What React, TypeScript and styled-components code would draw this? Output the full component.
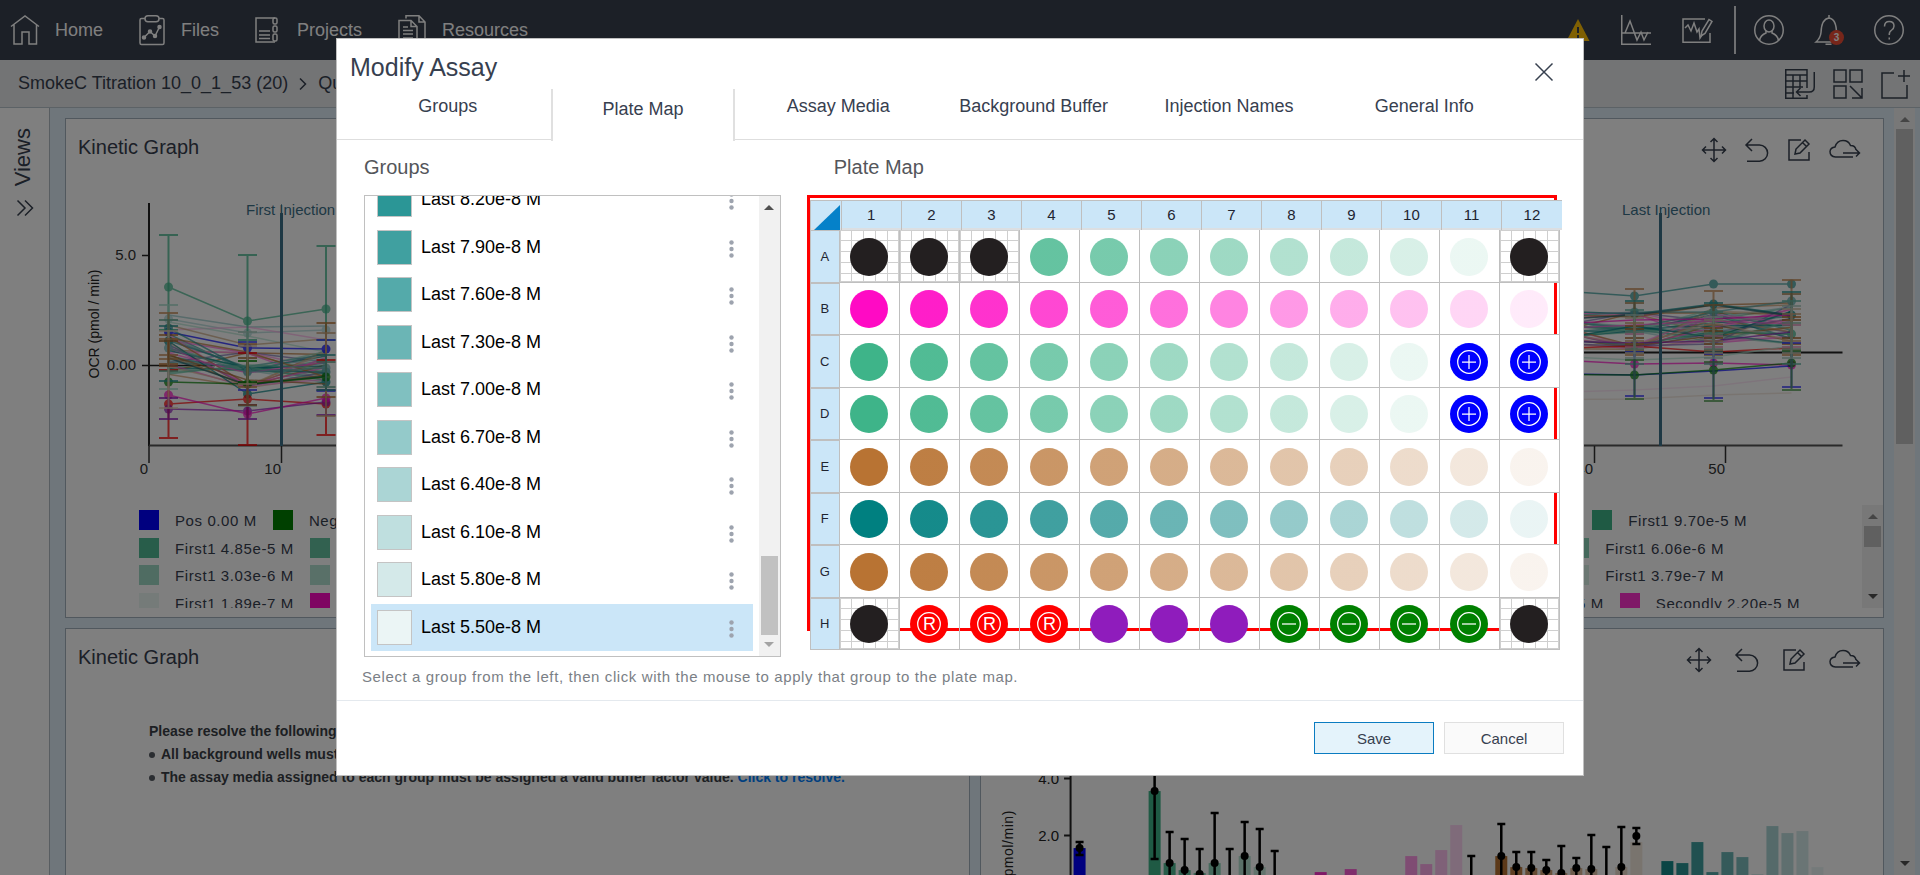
import React from "react";
import styled, { createGlobalStyle, css } from "styled-components";

const GlobalStyle = createGlobalStyle`
  *, *::before, *::after { box-sizing: border-box; }
  body {
    margin: 0;
    overflow: hidden;
    font-family: "Liberation Sans", Arial, sans-serif;
    font-size: 18px;
    color: #37404f;
    background: #fff;
  }
  h1, h2, h3 { margin: 0; font-weight: normal; }
  p, ul { margin: 0; padding: 0; }
  button { font-family: inherit; color: inherit; border: 0; padding: 0; background: none; cursor: pointer; }
`;

/* ---------- colour scales ---------- */

const fade = (rgb: string, alpha: number) => `rgba(${rgb}, ${alpha})`;
const GREEN = "62, 180, 137";
const PINK = "255, 10, 196";
const COPPER = "184, 115, 51";
const TEAL = "0, 128, 128";
const scale = (rgb: string, steps: number) =>
  Array.from({ length: steps }, (_, i) => fade(rgb, (steps - i) / steps));
const greens = scale(GREEN, 10);
const pinks = scale(PINK, 12);
const coppers = scale(COPPER, 12);
const teals = scale(TEAL, 12);

/* ---------- icons ---------- */

const Glyph = styled.svg`
  display: block;
  flex: none;
  fill: none;
  stroke: currentColor;
  stroke-width: 1.5;
  overflow: visible;
`;

const HomeIcon = () => (
  <Glyph width="28" height="30" viewBox="0 0 28 30">
    <path d="M0 11.5 14 1l14 10.5M3 9.5V29H11V17h7V29h7.5V9.5" />
  </Glyph>
);
const FilesIcon = () => (
  <Glyph width="26" height="30" viewBox="0 0 26 30">
    <path d="M6 3.5H2.5q-1.500 0-1.500 1.500V28q0 1.500 1.500 1.500H23.500q1.500 0 1.500-1.500V5q0-1.500-1.500-1.500H20" />
    <rect x="6" y="0.75" width="14" height="6" rx="3" />
    <path d="M5 22.5 11 16.5l5 4.5 4.500-9" />
    <g fill="currentColor"><circle cx="5" cy="22.500" r="1.500" /><circle cx="11" cy="16.500" r="1.500" /><circle cx="16" cy="21" r="1.500" /><circle cx="20.500" cy="12" r="1.500" /></g>
  </Glyph>
);
const ProjectsIcon = () => (
  <Glyph width="26" height="30" viewBox="0 0 26 30">
    <path d="M20 3H1V27H20M4 16H15M4 20H15M4 23.500H15" />
    <rect x="18" y="3" width="4" height="6" rx="1.500" />
    <rect x="18" y="11" width="4" height="6" rx="1.500" />
    <rect x="18" y="19" width="4" height="7" rx="1.500" />
  </Glyph>
);
const ResourcesIcon = () => (
  <Glyph width="28" height="30" viewBox="0 0 28 30">
    <path d="M8 3.500V0.750H21L27 7V29M21 0.750V7H27" />
    <path d="M1 29V5.500H13L19 11.500V29M13 5.500V11.500H19M5 12H10M5 15.500H15M5 19H15M5 23H15" />
  </Glyph>
);
const AlertIcon = () => (
  <Glyph width="24" height="22" viewBox="0 0 24 22">
    <path d="M12 0 23.500 22H0.500Z" fill="#ffc107" stroke="none" />
    <path d="M12 8v6M12 16v3" stroke="#37404f" strokeWidth="2" />
  </Glyph>
);
const TraceIcon = () => (
  <Glyph width="30" height="30" viewBox="0 0 30 30">
    <path d="M0.750 0V29.250H30M1 18H30M4 18 9 6l7 19 4-8 3 8 4-8" />
  </Glyph>
);
const TraceEditIcon = () => (
  <Glyph width="30" height="30" viewBox="0 0 30 30">
    <path d="M23 4H1V27.250H28V18M3 13l3-3 3 6 3-8 3 9 2-3 1 9 2-3" />
    <path d="m19 21 1-5 7-11.500 3 2L23 18.500Z" />
  </Glyph>
);
const UserIcon = () => (
  <Glyph width="30" height="30" viewBox="0 0 30 30">
    <circle cx="15" cy="15" r="14.250" />
    <ellipse cx="15" cy="11" rx="5" ry="6" />
    <path d="M5.500 25.500q1-5.500 6.500-7.500v-2M24.500 25.500q-1-5.500-6.500-7.500v-2" />
  </Glyph>
);
const BellIcon = () => (
  <Glyph width="28" height="30" viewBox="0 0 28 30">
    <path d="M1 27H25q-3-3-3.500-8.500Q21.500 4 14 3 6.500 4 6 17.500 5.500 23 1 27ZM14 3V0M10.500 29.250h6" />
  </Glyph>
);
const HelpIcon = () => (
  <Glyph width="30" height="30" viewBox="0 0 30 30">
    <circle cx="15" cy="15" r="14.250" />
    <path d="M10.500 11.500q0-5 4.750-5t4.750 4.500q0 2.500-2.500 4.250T15.250 20M15.250 22.500v2" />
  </Glyph>
);
const TableReturnIcon = () => (
  <Glyph width="30" height="30" viewBox="0 0 30 30">
    <path d="M22 19V0.750H0.750V29.250H22V26M1 6H22M1 12H22M1 18H18M1 24H9M8 6V29M15 6V18M29.250 3V18q0 5-5 5H11M15.500 19l-4 4 4 4" />
  </Glyph>
);
const TilesIcon = () => (
  <Glyph width="30" height="30" viewBox="0 0 30 30">
    <path d="M1 1H13V13H1ZM17 1H29V13H17ZM1 17H13V29H1ZM17 17 29 29M29 19V29H19" />
  </Glyph>
);
const AddPaneIcon = () => (
  <Glyph width="30" height="30" viewBox="0 0 30 30">
    <path d="M13 4H1V29H26V16M23 1V13M17 7H29" />
  </Glyph>
);
const MoveIcon = () => (
  <Glyph width="24" height="24" viewBox="0 0 24 24">
    <path d="M12 0.500V23.500M0.500 12H23.500M8.500 4 12 0.500 15.500 4M8.500 20l3.500 3.500 3.500-3.500M4 8.500 0.500 12 4 15.500M20 8.500l3.500 3.500-3.500 3.500" />
  </Glyph>
);
const UndoIcon = () => (
  <Glyph width="24" height="24" viewBox="0 0 24 24">
    <path d="M7 1 1 7l6 6M1 7H14.500a8 8 0 0 1 0 16.200H2" />
  </Glyph>
);
const EditIcon = () => (
  <Glyph width="22" height="22" viewBox="0 0 22 22">
    <path d="M13 1H1V21H21V13M7 15l1-5 9-9 4 4-9 9ZM14.500 3.500l4 4" />
  </Glyph>
);
const CloudIcon = () => (
  <Glyph width="32" height="22" viewBox="0 0 32 22">
    <path d="M24 18H6.500Q1 17.500 1 12.500 1.500 8.500 6 8 8 1.500 14 1.500q5.500 0 7.500 5 5 0 5.500 4.500M14 14H30.500M27 10.500l3.500 3.500-3.500 3.500" />
  </Glyph>
);
const DoubleChevron = () => (
  <Glyph width="16" height="16" viewBox="0 0 16 16">
    <path d="M0.500 0.500 8 8 0.500 15.500M8 0.500 15.500 8 8 15.500" />
  </Glyph>
);
const Chevron = () => (
  <Glyph width="8" height="12" viewBox="0 0 8 12">
    <path d="M1 0.500 6.500 6 1 11.500" />
  </Glyph>
);
const CloseIcon = () => (
  <Glyph width="18" height="18" viewBox="0 0 18 18">
    <path d="M0.500 0.500 17.500 17.500M17.500 0.500 0.500 17.500" />
  </Glyph>
);
const DotsIcon = () => (
  <Glyph width="5" height="18" viewBox="0 0 5 18">
    <g fill="#9da3ae" stroke="none"><circle cx="2.500" cy="2.500" r="2.200" /><circle cx="2.500" cy="9" r="2.200" /><circle cx="2.500" cy="15.500" r="2.200" /></g>
  </Glyph>
);

/* ---------- page frame ---------- */

const Page = styled.div`
  height: 100vh;
  display: flex;
  flex-direction: column;
  overflow: hidden;
`;
const TopBar = styled.header`
  flex: none;
  height: 60px;
  display: flex;
  justify-content: space-between;
  align-items: center;
  padding: 0 16px 0 11px;
  background: #38404e;
  color: #fff;
`;
const Nav = styled.nav`
  display: flex;
  gap: 36px;
`;
const NavLink = styled.a`
  display: flex;
  align-items: center;
  gap: 16px;
  line-height: 32px;
  color: inherit;
  text-decoration: none;
`;
const Tools = styled.div`
  display: flex;
  align-items: center;
  gap: 31px;
`;
const IconButton = styled.button`
  position: relative;
  display: block;
`;
const Divider = styled.span`
  width: 2px;
  height: 48px;
  margin: 0 -13px 0 -9px;
  background: #dfe1e4;
`;
const Badge = styled.span`
  position: absolute;
  right: -1px;
  bottom: 0;
  width: 15px;
  height: 15px;
  border-radius: 50%;
  background: #ee4c35;
  font-size: 10px;
  font-weight: bold;
  line-height: 15px;
  text-align: center;
`;
const CrumbBar = styled.div`
  flex: none;
  height: 48px;
  display: flex;
  justify-content: space-between;
  align-items: center;
  padding: 0 9px 0 18px;
  background: #e6e8eb;
  border-bottom: 1px solid #b8c4cc;
`;
const Crumbs = styled.div`
  display: flex;
  align-items: center;
  gap: 11px;
`;
const CrumbTools = styled.div`
  display: flex;
  gap: 18px;
`;
const Workspace = styled.div`
  flex: 1;
  min-height: 0;
  display: flex;
  background: #dfedf6;
`;
const Rail = styled.aside`
  flex: none;
  width: 50px;
  display: flex;
  flex-direction: column;
  align-items: center;
  gap: 14px;
  padding-top: 20px;
  background: #fff;
  border-right: 1px solid #b0bac2;
`;
const RailTitle = styled.h2`
  writing-mode: vertical-rl;
  transform: rotate(180deg);
  font-size: 22px;
  line-height: 32px;
  margin-right: 4px;
`;
const Board = styled.main`
  flex: 1;
  min-width: 0;
  display: grid;
  grid-template-columns: repeat(2, minmax(0, 1fr));
  grid-template-rows: 500px 500px;
  gap: 10px;
  padding: 10px 10px 0 15px;
  overflow: hidden;
`;
const Panel = styled.section<{ $wide?: boolean }>`
  ${(p) => p.$wide && css`grid-column: 1 / -1;`}
  background: #fff;
  border: 1px solid #a3b1bd;
  overflow: hidden;
`;
const PanelHeader = styled.div`
  height: 62px;
  display: flex;
  justify-content: space-between;
  align-items: center;
  padding: 0 22px 0 12px;
`;
const PanelTitle = styled.h2`
  font-size: 20px;
  line-height: 24px;
  padding-bottom: 6px;
`;
const PanelTools = styled.div<{ $gap: number }>`
  display: flex;
  align-items: center;
  gap: ${(p) => p.$gap}px;
`;
const Chart = styled.svg`
  display: block;
  width: 100%;
  height: auto;
  font-size: 15px;
`;

/* ---------- scrollbars ---------- */

const Track = styled.div<{ $margin?: string }>`
  flex: none;
  width: 21px;
  display: flex;
  flex-direction: column;
  align-items: center;
  padding: 9px 0;
  margin: ${(p) => p.$margin ?? "0"};
  background: #f1f1f1;
`;
const Thumb = styled.div<{ $height: number }>`
  width: 17px;
  height: ${(p) => p.$height}px;
  background: #c1c1c1;
`;
const Arrow = styled.div<{ $down?: boolean; $color: string }>`
  flex: none;
  border: 5px solid transparent;
  border-top: ${(p) => (p.$down ? `5px solid ${p.$color}` : "0")};
  border-bottom: ${(p) => (p.$down ? "0" : `5px solid ${p.$color}`)};
`;
const Space = styled.div<{ $size?: number }>`
  ${(p) => (p.$size === undefined ? css`flex: 1;` : css`flex: none; height: ${p.$size}px;`)}
`;

/* ---------- legend ---------- */

const Legend = styled.div`
  height: 103px;
  display: flex;
  padding-left: 73px;
  overflow: hidden;
`;
const LegendRows = styled.div`
  flex: 1;
  height: 115px;
  display: flex;
  flex-direction: column;
  padding-top: 5px;
`;
const LegendRow = styled.div<{ $inset: number }>`
  flex: 1;
  display: flex;
  justify-content: space-between;
  align-items: flex-start;
  padding-right: ${(p) => p.$inset}px;
`;
const LegendSide = styled.div`
  display: flex;
  gap: 16px;
`;
const LegendItem = styled.span`
  display: flex;
  align-items: flex-start;
  gap: 16px;
  font-size: 15px;
  line-height: 22px;
  letter-spacing: 0.04em;
  white-space: nowrap;
`;
const Swatch = styled.i<{ $color: string; $size: number; $outlined?: boolean }>`
  flex: none;
  width: ${(p) => p.$size}px;
  height: ${(p) => p.$size}px;
  background: ${(p) => p.$color};
  ${(p) => p.$outlined && css`border: 1px solid #c4c4c4; background-clip: padding-box;`}
`;

type Entry = { color: string; label: string };
const legend: { inset: number; left: Entry[]; right: Entry[] }[] = [
  {
    inset: 115,
    left: [{ color: "#0000ff", label: "Pos 0.00 M" }, { color: "#008000", label: "Neg 0.00 M" }],
    right: [{ color: greens[0], label: "First1 9.70e-5 M" }],
  },
  {
    inset: 138,
    left: [{ color: greens[1], label: "First1 4.85e-5 M" }, { color: greens[2], label: "First1 2.43e-5 M" }],
    right: [{ color: greens[4], label: "First1 6.06e-6 M" }],
  },
  {
    inset: 138,
    left: [{ color: greens[5], label: "First1 3.03e-6 M" }, { color: greens[6], label: "First1 1.52e-6 M" }],
    right: [{ color: greens[8], label: "First1 3.79e-7 M" }],
  },
  {
    inset: 62,
    left: [{ color: greens[9], label: "First1 1.89e-7 M" }, { color: pinks[0], label: "Secondly 1.10e-5 M" }],
    right: [{ color: pinks[1], label: "Secondly 4.40e-5 M" }, { color: pinks[2], label: "Secondly 2.20e-5 M" }],
  },
];
const Entries = ({ items }: { items: Entry[] }) => (
  <LegendSide>
    {items.map((e) => (
      <LegendItem key={e.label}>
        <Swatch $color={e.color} $size={20} />
        {e.label}
      </LegendItem>
    ))}
  </LegendSide>
);

/* ---------- kinetic chart ---------- */

type Series = { color: string; y: number[]; dot?: boolean };
const LEFT_X = [168.5, 247.5, 326];
const RIGHT_X = [1500, 1634.5, 1713.5, 1791.5];

/* Intermediate concentrations, spread over a band between the outer curves. */
const bandColors = ["#2b9594", "#cd9966", "#66c2a3", "#ff5ad5", "#55aaaa", "#b87333", "#8bd2b8", "#7a6fb0", "#94cac9", "#ff8ae0", "#008080", "#ddb898"];
const band = (count: number, ranges: [number, number][]): Series[] =>
  Array.from({ length: count }, (_, i) => ({
    color: bandColors[i % bandColors.length],
    y: ranges.map(([top, bottom], k) => top + (((i * 37 + k * 53 + i * k * 11) % 97) / 97) * (bottom - top)),
  }));

const leftSeries: Series[] = [
  ...band(30, [[334, 376], [352, 388], [350, 384]]),
  { color: "#3eb489", y: [287, 321, 309], dot: true },
  { color: "#8ec4c4", y: [315, 327, 326] },
  { color: "#a9d5d5", y: [319, 333, 330], dot: true },
  { color: "#fdb0e8", y: [330, 327, 340] },
  { color: "#b1e1d0", y: [322, 336, 352] },
  { color: "#c9a27a", y: [325, 345, 339] },
  { color: "#0000ff", y: [332, 348, 349], dot: true },
  { color: "#b87333", y: [338, 352, 377] },
  { color: "#2b9594", y: [328, 371, 372], dot: true },
  { color: "#008080", y: [341, 394, 382], dot: true },
  { color: "#ff5ad5", y: [353, 373, 362] },
  { color: "#66c2a3", y: [374, 365, 368] },
  { color: "#6bb4b6", y: [348, 372, 368], dot: true },
  { color: "#1a5f6a", y: [358, 385, 376] },
  { color: "#a56a30", y: [355, 380, 384] },
  { color: "#008000", y: [382, 384, 377], dot: true },
  { color: "#ff0000", y: [404, 399, 404], dot: true },
  { color: "#8f1cbc", y: [409, 411, 402], dot: true },
  { color: "#ff0ac6", y: [395, 414, 398], dot: true },
];
const rightSeries: Series[] = [
  ...band(36, [[308, 350], [312, 350], [308, 346], [304, 345]]),
  { color: "#2b9594", y: [287, 296, 284, 284], dot: true },
  { color: "#008080", y: [309, 314, 304, 315], dot: true },
  { color: "#b87333", y: [313, 317, 305, 303] },
  { color: "#55aaaa", y: [320, 312, 312, 301], dot: true },
  { color: "#1a5f6a", y: [323, 315, 305, 316] },
  { color: "#ff0ac6", y: [327, 320, 319, 315] },
  { color: "#ff5ad5", y: [331, 325, 321, 324] },
  { color: "#3eb489", y: [336, 345, 332, 334], dot: true },
  { color: "#8f1cbc", y: [340, 343, 341, 332] },
  { color: "#ff0000", y: [350, 346, 352, 348] },
  { color: "#b1e1d0", y: [354, 360, 357, 346] },
  { color: "#ff0ac6", y: [357, 364, 363, 365], dot: true },
  { color: "#0000ff", y: [373, 375, 371, 366] },
  { color: "#008000", y: [374, 375, 370, 363], dot: true },
  { color: "#fbe0f3", y: [394, 390, 386, 377] },
  { color: "#ece0d4", y: [400, 399, 395, 393] },
];

type Bar = { x: number; top: number; bottom: number; color: string };
const errorBars: Bar[] = [
  { x: 168.5, top: 235, bottom: 330, color: "#3eb489" },
  { x: 247.5, top: 255, bottom: 340, color: "#3eb489" },
  { x: 326, top: 246, bottom: 340, color: "#3eb489" },
  { x: 168.5, top: 370, bottom: 438, color: "#ff0000" },
  { x: 247.5, top: 353, bottom: 445, color: "#ff0000" },
  { x: 326, top: 360, bottom: 435, color: "#ff0000" },
  { x: 168.5, top: 398, bottom: 419, color: "#8f1cbc" },
  { x: 247.5, top: 405, bottom: 419, color: "#8f1cbc" },
  { x: 326, top: 390, bottom: 415, color: "#8f1cbc" },
  { x: 168.5, top: 326, bottom: 381, color: "#2b9594" },
  { x: 168.5, top: 335, bottom: 364, color: "#b87333" },
  { x: 168.5, top: 305, bottom: 389, color: "#a5dccb" },
  { x: 168.5, top: 313, bottom: 355, color: "#c58b55" },
  { x: 168.5, top: 320, bottom: 371, color: "#66a58f" },
  { x: 168.5, top: 331, bottom: 408, color: "#e6cdb8" },
  { x: 168.5, top: 339, bottom: 359, color: "#c58b55" },
  { x: 168.5, top: 341, bottom: 366, color: "#a56a30" },
  { x: 247.5, top: 342, bottom: 390, color: "#3b3bff" },
  { x: 247.5, top: 344, bottom: 387, color: "#c58b55" },
  { x: 247.5, top: 332, bottom: 406, color: "#a5c8bb" },
  { x: 247.5, top: 358, bottom: 405, color: "#a56a30" },
  { x: 247.5, top: 361, bottom: 382, color: "#008000" },
  { x: 247.5, top: 346, bottom: 384, color: "#d9c2a9" },
  { x: 326, top: 340, bottom: 391, color: "#3b3bff" },
  { x: 326, top: 323, bottom: 397, color: "#b87333" },
  { x: 326, top: 333, bottom: 416, color: "#c9a27a" },
  { x: 326, top: 355, bottom: 390, color: "#2b9594" },
  { x: 326, top: 362, bottom: 387, color: "#66a58f" },
  ...[1634.5, 1713.5, 1791.5].flatMap((x, i) => {
    const d = [0, 2, -9][i];
    return [
      { x, top: 289 + d, bottom: 355, color: "#c58b55" },
      { x, top: 301 + d, bottom: 352, color: "#2b9594" },
      { x, top: 303 + d, bottom: 350, color: "#a58050" },
      { x, top: 310 + d, bottom: 364, color: "#66b5a5" },
      { x, top: 326 + d, bottom: 344, color: "#b87333" },
      { x, top: 329 + d, bottom: 338, color: "#a56a30" },
      { x, top: 334 + d, bottom: 347, color: "#e08fb8" },
      { x, top: 352 + d, bottom: 396 + d, color: "#3b3bff" },
      { x, top: 360 + d, bottom: 399 + d, color: "#4c9a4c" },
      { x, top: 318 + d, bottom: 353, color: "#cdbfa4" },
      { x, top: 315 + d, bottom: 358, color: "#a9c8bf" },
      { x, top: 323 + d, bottom: 341, color: "#c9a27a" },
      { x, top: 332 + d, bottom: 349, color: "#8fb8a5" },
    ];
  }),
];

const KineticChart = () => (
  <Chart viewBox="66 181 1817 324">
    <g stroke="#222" strokeWidth="2" fill="none">
      <path d="M149 203V446" />
      <path d="M142 255.5H149M142 365.5H215" strokeWidth="1.5" />
      <path d="M1500 352.5H1842.5" />
    </g>
    <path d="M149 445.5H1842.5" stroke="#555" strokeWidth="2" />
    <path d="M149 446V463M281.5 446V463M1594.5 446V463M1725.5 446V463" stroke="#333" strokeWidth="1.5" />
    {[leftSeries, rightSeries].map((group, g) => {
      const xs = g === 0 ? LEFT_X : RIGHT_X;
      return group.map((s, i) => (
        <g key={`${g}-${i}`} opacity="0.7">
          <polyline fill="none" stroke={s.color} strokeWidth="1.5" points={s.y.map((y, k) => `${xs[k]},${y}`).join(" ")} />
          {s.dot && s.y.map((y, k) => <circle key={k} cx={xs[k]} cy={y} r="4.5" fill={s.color} />)}
        </g>
      ));
    })}
    {errorBars.map((b, i) => (
      <path key={i} opacity="0.75" fill="none" stroke={b.color} strokeWidth="2"
        d={`M${b.x} ${b.top}V${b.bottom}M${b.x - 9.5} ${b.top}h19M${b.x - 9.5} ${b.bottom}h19`} />
    ))}
    <path d="M281.5 213V446M1660.5 213V446" stroke="#3d7189" strokeWidth="3" />
    <path d="M281.5 204V213M1660.5 208V213" stroke="#7fa5b5" />
    <g fill="#3d7189">
      <text x="246" y="215">First Injection</text>
      <text x="1622" y="215">Last Injection</text>
    </g>
    <g fill="#333" textAnchor="end">
      <text x="136" y="260">5.0</text>
      <text x="136" y="370">0.00</text>
      <text x="148" y="474">0</text>
      <text x="281" y="474">10</text>
      <text x="1593" y="474">40</text>
      <text x="1725" y="474">50</text>
    </g>
    <text transform="translate(99 324) rotate(-90)" textAnchor="middle" fontSize="14" fill="#222">OCR (pmol / min)</text>
  </Chart>
);

/* ---------- bar chart ---------- */

type Column = { x: number; top?: number; color?: string; err?: [number, number]; dot?: number };
const columns: Column[] = [
  { x: 1079.5, top: 848, color: "#0000ff", err: [842, 855], dot: 848 },
  { x: 1154.5, top: 791, color: greens[0], err: [740, 859], dot: 791 },
  { x: 1169.5, top: 863, color: greens[1], err: [832, 880], dot: 863 },
  { x: 1184.5, top: 870, color: greens[2], err: [839, 880], dot: 870 },
  { x: 1199.5, top: 873, color: greens[3], err: [849, 880], dot: 874 },
  { x: 1214.5, top: 863, color: greens[4], err: [813, 880], dot: 863 },
  { x: 1229.5, err: [849, 880] },
  { x: 1244.5, top: 856, color: greens[6], err: [822, 880], dot: 856 },
  { x: 1259.5, top: 867, color: greens[7], err: [829, 880], dot: 867 },
  { x: 1274.5, err: [851, 880] },
  { x: 1320.5, top: 872, color: pinks[2] },
  { x: 1350.5, top: 869, color: pinks[4] },
  { x: 1411, top: 856, color: pinks[7] },
  { x: 1426, top: 864, color: pinks[8] },
  { x: 1441, top: 850, color: pinks[9] },
  { x: 1456, top: 825, color: pinks[10] },
  { x: 1471, err: [856, 880] },
  { x: 1501, top: 856, color: coppers[0], err: [824, 880], dot: 856 },
  { x: 1516, top: 867, color: coppers[1], err: [852, 880], dot: 867 },
  { x: 1531, top: 868, color: coppers[3], err: [852, 880], dot: 868 },
  { x: 1546, top: 870, color: coppers[4], err: [860, 880], dot: 870 },
  { x: 1561, top: 873, color: coppers[5], err: [846, 880], dot: 873 },
  { x: 1576, top: 868, color: coppers[6], err: [858, 880], dot: 868 },
  { x: 1591, top: 869, color: coppers[7], err: [835, 880], dot: 869 },
  { x: 1606, err: [847, 880] },
  { x: 1621, top: 867, color: coppers[9], err: [827, 880], dot: 867 },
  { x: 1636, top: 842, color: coppers[10], err: [828, 844], dot: 836 },
  { x: 1667, top: 861, color: teals[1] },
  { x: 1682, top: 863, color: teals[2] },
  { x: 1697, top: 842, color: teals[3] },
  { x: 1712, top: 872, color: teals[4] },
  { x: 1727, top: 852, color: teals[5] },
  { x: 1742, top: 857, color: teals[6] },
  { x: 1757, top: 874, color: teals[10] },
  { x: 1772, top: 826, color: teals[8] },
  { x: 1787, top: 833, color: teals[9] },
  { x: 1802, top: 831, color: teals[10] },
  { x: 1817, top: 867, color: teals[11] },
];

const BarChart = () => (
  <Chart viewBox="981 691 902 186">
    <path d="M1070.5 700V877M1064 778.5H1070M1064 835.5H1070" stroke="#222" strokeWidth="2" />
    <g fill="#222" textAnchor="end">
      <text x="1059" y="784">4.0</text>
      <text x="1059" y="841">2.0</text>
    </g>
    <text transform="translate(1013 810) rotate(-90)" textAnchor="end" fontSize="14" letterSpacing="0.04em" fill="#222">OCR (pmol/min)</text>
    {columns.map((c) => (
      <g key={c.x}>
        {c.top && <rect x={c.x - 6} y={c.top} width="12" height={880 - c.top} fill={c.color} />}
        {c.err && (
          <path stroke="#000" strokeWidth="2.5" fill="none"
            d={`M${c.x} ${c.err[0]}V${c.err[1]}M${c.x - 4} ${c.err[0]}h8M${c.x - 4} ${c.err[1]}h8`} />
        )}
        {c.dot && <circle cx={c.x} cy={c.dot} r="4" />}
      </g>
    ))}
  </Chart>
);

const Notice = styled.div`
  padding: 29px 0 0 83px;
  font-size: 14px;
  font-weight: bold;
  line-height: 23px;
  color: #3a3f46;
  white-space: nowrap;
`;
const NoticeList = styled.ul`
  list-style: none;
`;
const NoticeItem = styled.li`
  display: flex;
  align-items: center;
  gap: 6px;
  &::before {
    content: "";
    width: 6px;
    height: 6px;
    border-radius: 50%;
    background: #555a62;
  }
`;
const NoticeLink = styled.a`
  color: #0080ff;
  text-decoration: none;
`;

/* ---------- dialog ---------- */

const Overlay = styled.div`
  position: fixed;
  inset: 0;
  display: flex;
  justify-content: center;
  align-items: flex-start;
  padding-top: 38px;
  background: rgba(0, 0, 0, 0.5);
`;
const Dialog = styled.div`
  width: 65%;
  background: #fff;
  border: 1px solid #c0c0c0;
`;
const DialogHeader = styled.div`
  height: 50px;
  display: flex;
  justify-content: space-between;
  align-items: center;
  padding: 6px 30px 0 13px;
`;
const DialogTitle = styled.h1`
  font-size: 25px;
  line-height: 30px;
`;
const CloseButton = styled(IconButton)`
  align-self: flex-end;
  margin-bottom: 8px;
`;
const TabBar = styled.div`
  height: 51px;
  display: flex;
  padding: 0 61px 0 13px;
  border-bottom: 1px solid #dedede;
`;
const TabSlot = styled.div`
  flex: 1;
  padding: 0 6px;
`;
const Tab = styled.button<{ $active?: boolean }>`
  display: block;
  width: 100%;
  font-size: 18px;
  line-height: 34px;
  text-align: center;
  white-space: nowrap;
  ${(p) =>
    p.$active &&
    css`
      height: 52px;
      padding: 3px 0 15px;
      background: #fff;
      border: solid #e0e0e0;
      border-width: 0 2px;
    `}
`;
const Columns = styled.div`
  display: grid;
  grid-template-columns: minmax(0, 5fr) minmax(0, 9fr);
  gap: 26px;
  padding: 12px 26px 0 27px;
`;
const SectionTitle = styled.h3<{ $indent?: boolean }>`
  font-size: 20px;
  line-height: 30px;
  margin-bottom: 13px;
  padding-left: ${(p) => (p.$indent ? 27 : 0)}px;
  color: #54565b;
`;
const GroupBox = styled.div`
  height: 462px;
  display: flex;
  border: 1px solid #c0c0c0;
`;
const GroupView = styled.div`
  flex: 1;
  min-width: 0;
  display: flex;
  flex-direction: column;
  justify-content: flex-end;
  padding: 0 6px 5px;
  overflow: hidden;
`;
const GroupList = styled.ul`
  flex: none;
  height: 475px;
  display: flex;
  flex-direction: column;
  list-style: none;
`;
const GroupRow = styled.li<{ $selected?: boolean }>`
  flex: 1;
  display: flex;
  align-items: center;
  gap: 9px;
  padding: 0 19px 0 6px;
  color: #000;
  background: ${(p) => (p.$selected ? "#cbe6f8" : "transparent")};
`;
const GroupName = styled.span`
  flex: 1;
`;
const RowMenu = styled(IconButton)`
  padding-top: 3px;
`;

const PlateFrame = styled.div`
  height: 436px;
  padding-top: 2px;
  border: 3px solid #f00;
`;
const PlateTable = styled.table`
  display: block;
  color: #1f2430;
`;
const PlateHead = styled.thead`
  display: block;
  margin-right: -8px;
`;
const HeadRow = styled.tr`
  display: grid;
  grid-template-columns: 32px repeat(12, minmax(0, 1fr));
  height: 30px;
  background: #cbe6f8;
  border-top: 1px solid #bfbfbf;
  border-bottom: 2px solid #dcdfe2;
`;
const HeadCell = styled.th`
  padding: 0;
  font-size: 15px;
  font-weight: normal;
  line-height: 28px;
  &:not(:last-child) { border-right: 1px solid #bfbfbf; }
`;
const Corner = styled.td`
  display: flex;
  justify-content: flex-end;
  align-items: flex-end;
  height: 29px;
  padding: 0 1px 0 0;
  border: solid #bfbfbf;
  border-width: 0 1px;
`;
const PlateBody = styled.tbody`
  display: grid;
  grid-template-rows: repeat(8, 1fr);
  height: 420px;
  margin-right: -6px;
`;
const PlateRow = styled.tr`
  display: grid;
  grid-template-columns: 30px repeat(12, minmax(0, 1fr));
`;
const RowLabel = styled.th`
  display: grid;
  place-items: center;
  padding: 0;
  font-size: 13px;
  font-weight: normal;
  background: #cbe6f8;
  border: 1px solid #bfbfbf;
`;
const WellCell = styled.td<{ $opaque?: boolean; $hatched?: boolean }>`
  display: grid;
  place-items: center;
  padding: 2px 0 0;
  border: solid #bfbfbf;
  border-width: 0 1px 1px 0;
  background-color: ${(p) => (p.$opaque || p.$hatched ? "#fff" : "transparent")};
  ${(p) =>
    p.$hatched &&
    css`
      background-image: repeating-linear-gradient(90deg, transparent 0 11px, #cfcfcf 11px 12px),
        repeating-linear-gradient(180deg, transparent 0 10px, #cfcfcf 10px 11px);
      box-shadow: inset 0 0 0 1px #cfcfcf;
    `}
`;
const WellDisc = styled.button<{ $color: string }>`
  display: grid;
  place-items: center;
  width: 38px;
  height: 38px;
  border-radius: 50%;
  background: linear-gradient(${(p) => p.$color}, ${(p) => p.$color}), #fff;
`;
const Symbol = styled.svg`
  display: block;
  fill: none;
  stroke: #fff;
  stroke-width: 1.25;
`;
const Hint = styled.p`
  padding-left: 25px;
  margin: 10px 0 13px;
  font-size: 15px;
  line-height: 20px;
  letter-spacing: 0.04em;
  color: #7b7f86;
`;
const DialogFooter = styled.div`
  display: flex;
  justify-content: flex-end;
  gap: 10px;
  padding: 21px 19px;
  border-top: 1px solid #e4e9ee;
`;
const ActionButton = styled.button<{ $primary?: boolean }>`
  width: 120px;
  height: 32px;
  font-size: 15px;
  border: 1px solid ${(p) => (p.$primary ? "#0a7cc1" : "#e0e0e0")};
  background: ${(p) => (p.$primary ? "#e4f3fb" : "#fafafa")};
`;

type Mark = "plus" | "minus" | "ref";
type Well = { color: string; mark?: Mark; blank?: boolean };
const plain = (colors: string[]): Well[] => colors.map((color) => ({ color }));
const times = (n: number, well: Well): Well[] => Array.from({ length: n }, () => well);
const blank: Well = { color: "#231f20", blank: true };
const positive: Well = { color: "#0000ff", mark: "plus" };
const negative: Well = { color: "#008000", mark: "minus" };
const reference: Well = { color: "#ff0000", mark: "ref" };

const plate: { name: string; wells: Well[] }[] = [
  { name: "A", wells: [...times(3, blank), ...plain(greens.slice(2)), blank] },
  { name: "B", wells: plain(pinks) },
  { name: "C", wells: [...plain(greens), ...times(2, positive)] },
  { name: "D", wells: [...plain(greens), ...times(2, positive)] },
  { name: "E", wells: plain(coppers) },
  { name: "F", wells: plain(teals) },
  { name: "G", wells: plain(coppers) },
  { name: "H", wells: [blank, ...times(3, reference), ...times(3, { color: "#8f1cbc" }), ...times(4, negative), blank] },
];

const WellMark = ({ mark }: { mark: Mark }) => (
  <Symbol width="24" height="24" viewBox="0 0 24 24">
    <circle cx="12" cy="12" r="11.3" />
    {mark === "plus" && <path d="M5 12H19M12 5V19" />}
    {mark === "minus" && <path d="M5 12H19" />}
    {mark === "ref" && (
      <text x="12.5" y="18" textAnchor="middle" fontSize="18" fill="#fff" stroke="none">R</text>
    )}
  </Symbol>
);

const tabs = ["Groups", "Plate Map", "Assay Media", "Background Buffer", "Injection Names", "General Info"];
const groups = ["8.20", "7.90", "7.60", "7.30", "7.00", "6.70", "6.40", "6.10", "5.80", "5.50"];

const Actions = ({ gap }: { gap: number }) => (
  <PanelTools $gap={gap}>
    <IconButton aria-label="Move"><MoveIcon /></IconButton>
    <IconButton aria-label="Undo"><UndoIcon /></IconButton>
    <IconButton aria-label="Edit"><EditIcon /></IconButton>
    <IconButton aria-label="Export"><CloudIcon /></IconButton>
  </PanelTools>
);

export default function App() {
  return (
    <>
      <GlobalStyle />
      <Page>
        <TopBar>
          <Nav>
            <NavLink href="#home"><HomeIcon />Home</NavLink>
            <NavLink href="#files"><FilesIcon />Files</NavLink>
            <NavLink href="#projects"><ProjectsIcon />Projects</NavLink>
            <NavLink href="#resources"><ResourcesIcon />Resources</NavLink>
          </Nav>
          <Tools>
            <IconButton aria-label="Warnings"><AlertIcon /></IconButton>
            <IconButton aria-label="Traces"><TraceIcon /></IconButton>
            <IconButton aria-label="Edit trace"><TraceEditIcon /></IconButton>
            <Divider />
            <IconButton aria-label="Account"><UserIcon /></IconButton>
            <IconButton aria-label="Notifications"><BellIcon /><Badge>3</Badge></IconButton>
            <IconButton aria-label="Help"><HelpIcon /></IconButton>
          </Tools>
        </TopBar>
        <CrumbBar>
          <Crumbs>
            <span>SmokeC Titration 10_0_1_53 (20)</span>
            <Chevron />
            <span>Quick View</span>
          </Crumbs>
          <CrumbTools>
            <IconButton aria-label="Reset table"><TableReturnIcon /></IconButton>
            <IconButton aria-label="Arrange"><TilesIcon /></IconButton>
            <IconButton aria-label="Add pane"><AddPaneIcon /></IconButton>
          </CrumbTools>
        </CrumbBar>
        <Workspace>
          <Rail>
            <RailTitle>Views</RailTitle>
            <IconButton aria-label="Expand views"><DoubleChevron /></IconButton>
          </Rail>
          <Board>
            <Panel $wide>
              <PanelHeader>
                <PanelTitle>Kinetic Graph</PanelTitle>
                <Actions gap={19} />
              </PanelHeader>
              <KineticChart />
              <Legend>
                <LegendRows>
                  {legend.map((row, i) => (
                    <LegendRow key={i} $inset={row.inset}>
                      <Entries items={row.left} />
                      <Entries items={row.right} />
                    </LegendRow>
                  ))}
                </LegendRows>
                <Track>
                  <Arrow $color="#8a8a8a" />
                  <Space $size={7} />
                  <Thumb $height={21} />
                  <Space />
                  <Arrow $down $color="#505050" />
                </Track>
              </Legend>
            </Panel>
            <Panel>
              <PanelHeader><PanelTitle>Kinetic Graph</PanelTitle></PanelHeader>
              <Notice>
                <p>Please resolve the following issues:</p>
                <NoticeList>
                  <NoticeItem>All background wells must be assigned.</NoticeItem>
                  <NoticeItem>
                    <span>
                      The assay media assigned to each group must be assigned a valid buffer factor value.{" "}
                      <NoticeLink href="#resolve">Click to resolve.</NoticeLink>
                    </span>
                  </NoticeItem>
                </NoticeList>
              </Notice>
            </Panel>
            <Panel>
              <PanelHeader>
                <PanelTitle>Bar Chart</PanelTitle>
                <Actions gap={24} />
              </PanelHeader>
              <BarChart />
            </Panel>
          </Board>
          <Track $margin="0 5px 0 0">
            <Arrow $color="#8a8a8a" />
            <Space $size={7} />
            <Thumb $height={315} />
            <Space />
            <Arrow $down $color="#505050" />
          </Track>
        </Workspace>
      </Page>

      <Overlay>
        <Dialog role="dialog" aria-modal="true" aria-labelledby="dialog-title">
          <DialogHeader>
            <DialogTitle id="dialog-title">Modify Assay</DialogTitle>
            <CloseButton aria-label="Close"><CloseIcon /></CloseButton>
          </DialogHeader>
          <TabBar role="tablist">
            {tabs.map((name) => (
              <TabSlot key={name}>
                <Tab role="tab" aria-selected={name === "Plate Map"} $active={name === "Plate Map"}>{name}</Tab>
              </TabSlot>
            ))}
          </TabBar>
          <Columns>
            <section>
              <SectionTitle>Groups</SectionTitle>
              <GroupBox>
                <GroupView>
                  <GroupList>
                    {groups.map((value, i) => (
                      <GroupRow key={value} $selected={i === groups.length - 1}>
                        <Swatch $color={`color-mix(in srgb, rgb(${TEAL}) ${Math.round(((10 - i) / 12) * 100)}%, white)`} $size={35} $outlined />
                        <GroupName>Last {value}e-8 M</GroupName>
                        <RowMenu aria-label="Group options"><DotsIcon /></RowMenu>
                      </GroupRow>
                    ))}
                  </GroupList>
                </GroupView>
                <Track>
                  <Arrow $color="#505050" />
                  <Space />
                  <Thumb $height={79} />
                  <Space $size={7} />
                  <Arrow $down $color="#a3a3a3" />
                </Track>
              </GroupBox>
            </section>
            <section>
              <SectionTitle $indent>Plate Map</SectionTitle>
              <PlateFrame>
                <PlateTable>
                  <PlateHead>
                    <HeadRow>
                      <Corner>
                        <svg width="26" height="25" viewBox="0 0 26 25"><path d="M26 0V25H0Z" fill="#0581c9" /></svg>
                      </Corner>
                      {plate[0].wells.map((_, i) => (
                        <HeadCell key={i} scope="col">{i + 1}</HeadCell>
                      ))}
                    </HeadRow>
                  </PlateHead>
                  <PlateBody>
                    {plate.map((row, r) => (
                      <PlateRow key={row.name}>
                        <RowLabel scope="row">{row.name}</RowLabel>
                        {row.wells.map((well, c) => (
                          <WellCell key={c} $opaque={r % 2 === 0 && r > 0} $hatched={well.blank}>
                            <WellDisc $color={well.color} aria-label={`${row.name}${c + 1}`}>
                              {well.mark && <WellMark mark={well.mark} />}
                            </WellDisc>
                          </WellCell>
                        ))}
                      </PlateRow>
                    ))}
                  </PlateBody>
                </PlateTable>
              </PlateFrame>
            </section>
          </Columns>
          <Hint>Select a group from the left, then click with the mouse to apply that group to the plate map.</Hint>
          <DialogFooter>
            <ActionButton $primary>Save</ActionButton>
            <ActionButton>Cancel</ActionButton>
          </DialogFooter>
        </Dialog>
      </Overlay>
    </>
  );
}
